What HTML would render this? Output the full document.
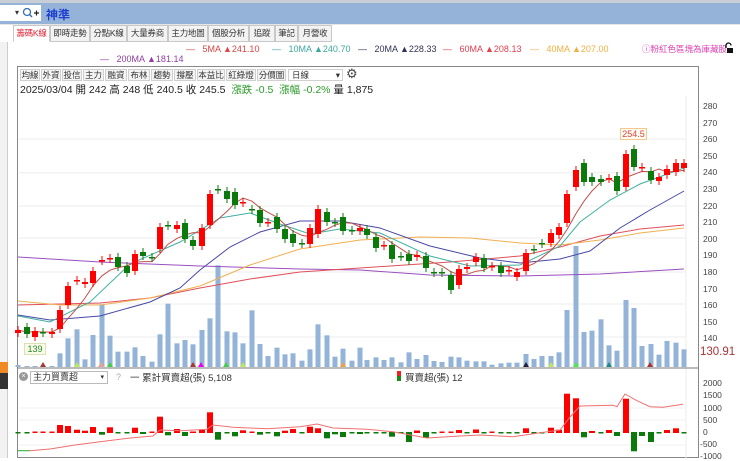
<!DOCTYPE html>
<html><head><meta charset="utf-8"><style>
*{margin:0;padding:0;box-sizing:border-box}
body{width:740px;height:458px;overflow:hidden;background:#fff;font-family:"Liberation Sans","Noto Sans CJK TC",sans-serif;position:relative}
.a{position:absolute;white-space:nowrap}
.tab{position:absolute;top:25px;height:17px;border:1px solid #c8c8c8;background:#f3f3f3;font-size:8.5px;color:#333;text-align:center;line-height:15px;white-space:nowrap;overflow:hidden;letter-spacing:-0.2px}
.tb{position:absolute;top:69px;height:12px;border:1px solid #d0d0d0;background:#f4f4f4;font-size:8.5px;color:#333;text-align:center;line-height:10px;white-space:nowrap;overflow:hidden}
.ax{position:absolute;left:703px;font-size:8.5px;color:#444}
</style></head><body>
<div class="a" style="left:0;top:0;width:740px;height:3px;background:#c9ced6"></div>
<div class="a" style="left:0;top:3px;width:740px;height:21px;background:#95b3d8"></div>
<div class="a" style="left:0;top:5px;width:41px;height:16px;background:#fff"></div>
<div class="a" style="left:15px;top:8px;font-size:8px;color:#333">▾</div>
<svg class="a" style="left:22px;top:7px" width="18" height="12"><circle cx="5" cy="5" r="3.5" fill="none" stroke="#3a6fb0" stroke-width="1.3"/><line x1="7.5" y1="7.5" x2="10" y2="10" stroke="#3a6fb0" stroke-width="1.5"/><path d="M12 6h5M14.5 3.5v5" stroke="#222" stroke-width="1.2"/></svg>
<div class="a" style="left:46px;top:6px;font-size:12px;font-weight:bold;color:#1c3fd0">神準</div>
<div class="a" style="left:0;top:24px;width:740px;height:1px;background:#e6e6e6"></div>
<div class="tab" style="left:13px;width:37px;background:#fff;color:#d23;border-bottom-color:#fff">籌碼K線</div>
<div class="tab" style="left:50px;width:40px">即時走勢</div>
<div class="tab" style="left:90px;width:37px">分點K線</div>
<div class="tab" style="left:127px;width:41px">大量券商</div>
<div class="tab" style="left:168px;width:40px">主力地圖</div>
<div class="tab" style="left:208px;width:41px">個股分析</div>
<div class="tab" style="left:249px;width:26px">追蹤</div>
<div class="tab" style="left:275px;width:23px">筆記</div>
<div class="tab" style="left:298px;width:34px">月營收</div>
<div class="a" style="left:0;top:42px;width:8px;height:416px;background:#f2f2f2;border-right:1px solid #ccc"></div>
<div class="a" style="left:0;top:362px;width:8px;height:11px;background:#f08a24"></div>
<div class="a" style="left:0;top:373px;width:8px;height:16px;background:#333"></div>
<div class="a" style="top:44px;left:186px;font-size:9px;color:#d44">—&nbsp;&nbsp;&nbsp;5MA ▲241.10</div>
<div class="a" style="top:44px;left:272px;font-size:9px;color:#3aa9a0">—&nbsp;&nbsp;&nbsp;10MA ▲240.70</div>
<div class="a" style="top:44px;left:358px;font-size:9px;color:#335">—&nbsp;&nbsp;&nbsp;20MA ▲228.33</div>
<div class="a" style="top:44px;left:443px;font-size:9px;color:#e04050">—&nbsp;&nbsp;&nbsp;60MA ▲208.13</div>
<div class="a" style="top:44px;left:530px;font-size:9px;color:#f0b040">—&nbsp;&nbsp;&nbsp;40MA ▲207.00</div>
<div class="a" style="top:43px;left:642px;font-size:8.5px;color:#e040b0">ⓘ粉紅色區塊為庫藏股</div>
<svg class="a" style="left:724px;top:42px" width="10" height="12"><path d="M2 6V3.5a2.5 2.5 0 0 1 5 0" fill="none" stroke="#111" stroke-width="1.3"/><rect x="3" y="6" width="6" height="5" fill="#111"/></svg>
<div class="a" style="top:54px;left:100px;font-size:9px;color:#9040a0">—&nbsp;&nbsp;&nbsp;200MA ▲181.14</div>
<div class="a" style="left:17px;top:66px;width:682px;height:392px;border:1px solid #888"></div>
<div class="tb" style="left:20px;width:20px">均線</div>
<div class="tb" style="left:41px;width:20px">外資</div>
<div class="tb" style="left:62px;width:20px">投信</div>
<div class="tb" style="left:83px;width:21px">主力</div>
<div class="tb" style="left:105px;width:22px">融資</div>
<div class="tb" style="left:128px;width:22px">布林</div>
<div class="tb" style="left:151px;width:22px">趨勢</div>
<div class="tb" style="left:174px;width:22px">撐壓</div>
<div class="tb" style="left:197px;width:28px">本益比</div>
<div class="tb" style="left:226px;width:30px">紅綠燈</div>
<div class="tb" style="left:257px;width:29px">分價圖</div>
<div class="tb" style="left:288px;width:55px;background:#fff;text-align:left;padding-left:3px">日線<span style="float:right;margin-right:2px">▾</span></div>
<div class="a" style="left:346px;top:66px;font-size:13px;color:#444">⚙</div>
<div class="a" style="left:20px;top:82px;font-size:10.5px;color:#222">2025/03/04 開 242 高 248 低 240.5 收 245.5 &nbsp;<span style="color:#2a9a2a">漲跌 -0.5 &nbsp;漲幅 -0.2%</span> 量 1,875</div>
<div class="ax" style="top:101px">280</div><div class="ax" style="top:118px">270</div><div class="ax" style="top:134px">260</div><div class="ax" style="top:151px">250</div><div class="ax" style="top:167px">240</div><div class="ax" style="top:184px">230</div><div class="ax" style="top:201px">220</div><div class="ax" style="top:217px">210</div><div class="ax" style="top:234px">200</div><div class="ax" style="top:250px">190</div><div class="ax" style="top:267px">180</div><div class="ax" style="top:284px">170</div><div class="ax" style="top:300px">160</div><div class="ax" style="top:317px">150</div><div class="ax" style="top:333px">140</div>
<div class="a" style="left:700px;top:346px;font-size:11.5px;color:#a33">130.91</div>
<div class="ax" style="top:378px">2000</div><div class="ax" style="top:390px">1500</div><div class="ax" style="top:403px">1000</div><div class="ax" style="top:415px">500</div><div class="ax" style="top:427px">0</div><div class="ax" style="top:439px;left:700px">-500</div><div class="ax" style="top:451px;left:700px">-1000</div>
<svg class="a" style="left:0;top:0" width="740" height="458" id="s"></svg>
<div class="a" style="left:620px;top:128px;width:27px;height:12px;border:1px solid #f0c890;background:#fffbee;font-size:9px;color:#d44;text-align:center;line-height:10px">254.5</div>
<div class="a" style="left:24px;top:343px;width:22px;height:12px;border:1px solid #dde0b0;background:#fafae8;font-size:9px;color:#2a8a2a;text-align:center;line-height:10px">139</div>
<div class="a" style="left:19px;top:372px;width:9px;height:9px;border-radius:50%;background:#999;color:#fff;font-size:7px;line-height:9px;text-align:center">×</div>
<div class="a" style="left:30px;top:371px;width:78px;height:13px;border:1px solid #bbb;font-size:9px;line-height:11px;padding-left:2px;color:#333">主力買賣超<span style="float:right;margin-right:3px;font-size:7px">▾</span></div>
<div class="a" style="left:116px;top:372px;font-size:9px;color:#aaa">?</div>
<div class="a" style="left:130px;top:370px;font-size:9.5px;color:#333">一 累計買賣超(張) 5,108</div>
<div class="a" style="left:397px;top:371px;width:4px;height:5px;background:#e22"></div>
<div class="a" style="left:397px;top:376px;width:4px;height:5px;background:#1a8a1a"></div>
<div class="a" style="left:405px;top:370px;font-size:9.5px;color:#333">買賣超(張) 12</div>
<script>
var s=document.getElementById('s'),h='';
function L(x1,y1,x2,y2,c,w){h+='<line x1="'+x1+'" y1="'+y1+'" x2="'+x2+'" y2="'+y2+'" stroke="'+c+'" stroke-width="'+(w||1)+'"/>';}
function R(x,y,w,hh,c){h+='<rect x="'+x+'" y="'+y+'" width="'+w+'" height="'+hh+'" fill="'+c+'"/>';}
function P(pts,c,w){h+='<polyline fill="none" stroke="'+c+'" stroke-width="'+(w||1)+'" points="'+pts.map(function(p){return p.join(',')}).join(' ')+'"/>';}
[139,172.7,206,238,272,304,337].forEach(function(y){L(19,y,686,y,'#eee');});
[408,420,445].forEach(function(y){L(19,y,686,y,'#f0f0f0');});
L(686,96,686,458,'#eee');
L(17,368,698,368,'#777');
var C=[[18,330,333,'r'],[27,327,334,'g'],[35,331,337,'r'],[43,332,333,'g'],[52,332,334,'r'],[60,310,329,'r'],[68,286,305,'r'],[77,280,281,'r'],[85,282,284,'r'],[93,271,283,'r'],[102,260,261,'r'],[110,258,259,'r'],[118,257,267,'g'],[127,266,273,'g'],[135,254,271,'r'],[143,252,256,'g'],[152,257,258,'g'],[160,227,249,'r'],[168,225,226,'g'],[177,225,229,'r'],[185,223,239,'g'],[193,240,246,'g'],[202,228,246,'r'],[210,194,225,'r'],[218,189,190,'g'],[227,191,199,'g'],[235,192,205,'g'],[243,202,203,'r'],[252,209,210,'g'],[260,210,223,'g'],[268,222,223,'r'],[277,217,229,'g'],[285,229,239,'g'],[293,234,243,'g'],[302,243,244,'g'],[310,228,244,'r'],[318,209,234,'r'],[327,212,222,'g'],[335,222,223,'g'],[343,217,231,'g'],[352,230,231,'g'],[360,228,231,'r'],[367,229,235,'g'],[376,237,248,'g'],[384,245,246,'r'],[392,245,259,'g'],[401,256,257,'g'],[409,254,261,'g'],[417,255,257,'r'],[426,256,268,'g'],[434,272,273,'g'],[442,272,273,'g'],[451,275,290,'g'],[459,269,285,'r'],[467,267,269,'r'],[476,257,262,'r'],[484,258,268,'g'],[492,266,267,'r'],[501,266,273,'g'],[509,270,271,'r'],[517,272,277,'r'],[526,253,271,'r'],[534,249,250,'g'],[542,243,244,'g'],[551,233,243,'r'],[559,227,235,'r'],[567,194,223,'r'],[576,170,187,'r'],[584,163,182,'g'],[592,177,182,'g'],[601,179,182,'g'],[609,178,179,'r'],[617,176,191,'g'],[626,154,187,'r'],[634,149,167,'g'],[642,167,168,'r'],[651,171,180,'g'],[659,177,181,'r'],[667,169,175,'r'],[676,163,172,'r'],[684,163,168,'r']];
var v1=[585,588,588,590,590,550,505,478,568,495,403,497,545,545,532,558,575,493,401,520,510,523,480,445,286,484,487,520,421,522,558,533,553,550,572,538,463,496,560,536,572,533];
var v2=[720,712,720,712,727,697,717,705,723,726,710,712,722,724,724,734,730,728,728,702,717,708,708,697,570,378,636,632,598,676,692,540,564,678,672,704,663,668,688];
var V=v1.map(function(z){return 170+z/3}).concat(v2.map(function(z){return 120+z/3}));
C.forEach(function(c,i){var y=Math.min(V[i],366);R(c[0]-2.5,y,5,367-y,'#93b3d8');});
[[43,'#a33'],[77,'#b8e860'],[101,'#f0a090'],[110,'#4c4'],[193,'#a33'],[201,'#e0e'],[226,'#4c4'],[243,'#b8e860'],[343,'#f0a040'],[526,'#224'],[551,'#b8e860'],[576,'#4e4'],[609,'#288'],[650,'#a33']].forEach(function(m){h+='<polygon points="'+(m[0]-3)+',367 '+(m[0]+3)+',367 '+m[0]+',362" fill="'+m[1]+'"/>';});
P([[18,257],[100,262],[200,266],[300,269],[360,270],[430,275],[520,276],[600,274],[684,269]],'#9b4fc0');
P([[18,305],[100,303],[150,298],[200,288],[250,279],[300,272],[360,268],[450,262],[520,256],[560,247],[600,236],[640,229],[684,225]],'#e0505a');
P([[18,301],[60,305],[100,305],[150,298],[200,286],[250,265],[300,249],[360,240],[420,237],[470,238],[520,243],[560,245],[600,240],[640,233],[684,228]],'#f0b050');
P([[18,315],[50,320],[100,316],[150,302],[180,288],[200,270],[230,247],[260,232],[300,221],[340,221],[380,228],[430,246],[480,258],[520,263],[560,259],[590,251],[620,228],[650,210],[684,191]],'#4848a8');
P([[18,316],[50,322],[90,302],[130,264],[180,242],[220,218],[250,213],[280,224],[310,234],[340,229],[380,233],[430,256],[470,266],[520,265],[560,246],[580,222],[610,200],[640,184],[684,168]],'#40b0a0');
var cl=C.map(function(c){return c[3]=='r'?c[1]:c[2]}),m5=[];
C.forEach(function(c,i){var a=0,n=0;for(var j=Math.max(0,i-4);j<=i;j++){a+=cl[j];n++;}m5.push([c[0],(a/n).toFixed(1)]);});
P(m5,'#c0504d');
C.forEach(function(c){var col=c[3]=='r'?'#f00':'#0a7a0a';L(c[0],c[1]-4,c[0],c[2]+4,col);var hh=Math.max(c[2]-c[1],1.5);R(c[0]-3,c[1],6,hh,col);});
var LB=[0.5,0.5,-0.5,-0.5,-0.5,-8,-7,-3.3,-2.3,-6,2.7,-5.7,0.5,0.5,-5.3,2,-0.5,-16.3,3.3,-4,4,-1.3,-3,-20.7,7.7,0.5,4.3,-2.7,-0.5,2.7,0.5,4.3,-2.3,-4,0.5,-6.3,-4.7,6.3,2.3,5,0.5,2,0.5,0.5,0.5,4.7,0.5,10,-2.5,6,0.5,-0.5,-0.5,-3,0.5,-3.5,0.5,-0.5,0.5,0.5,0.5,-4.7,0.5,0.5,-5.3,-3.3,-39.3,-34.7,5.3,-2,0.5,-3,4,-34.3,19.3,4,10,0.5,-3,-4.7,0.5];
C.forEach(function(c,i){var v=LB[i],col=v<0?'#f00':'#0a7a0a',hh=Math.max(Math.abs(v),1.5),w=Math.abs(v)<1?5:6;R(c[0]-w/2,v<0?433-hh:432,w,hh,col);});
P([[18,450.7],[30,450.7]],'#2a2');
P([[30,450.7],[50,449],[75,445],[100,441.7],[133,437.7],[153,436],[160,430],[180,430.7],[207,429.3],[213,425],[233,427.3],[267,428.7],[300,426.7],[317,424],[333,428],[367,429.3],[393,431.7],[427,438],[460,436],[480,435],[513,436.7],[547,431.7],[560,430],[570,417],[580,406],[613,405.3],[617,406.7],[625,394],[637,400.7],[650,406.7],[663,407.3],[683,404.3]],'#f07070');
s.innerHTML=h;
</script>
</body></html>
